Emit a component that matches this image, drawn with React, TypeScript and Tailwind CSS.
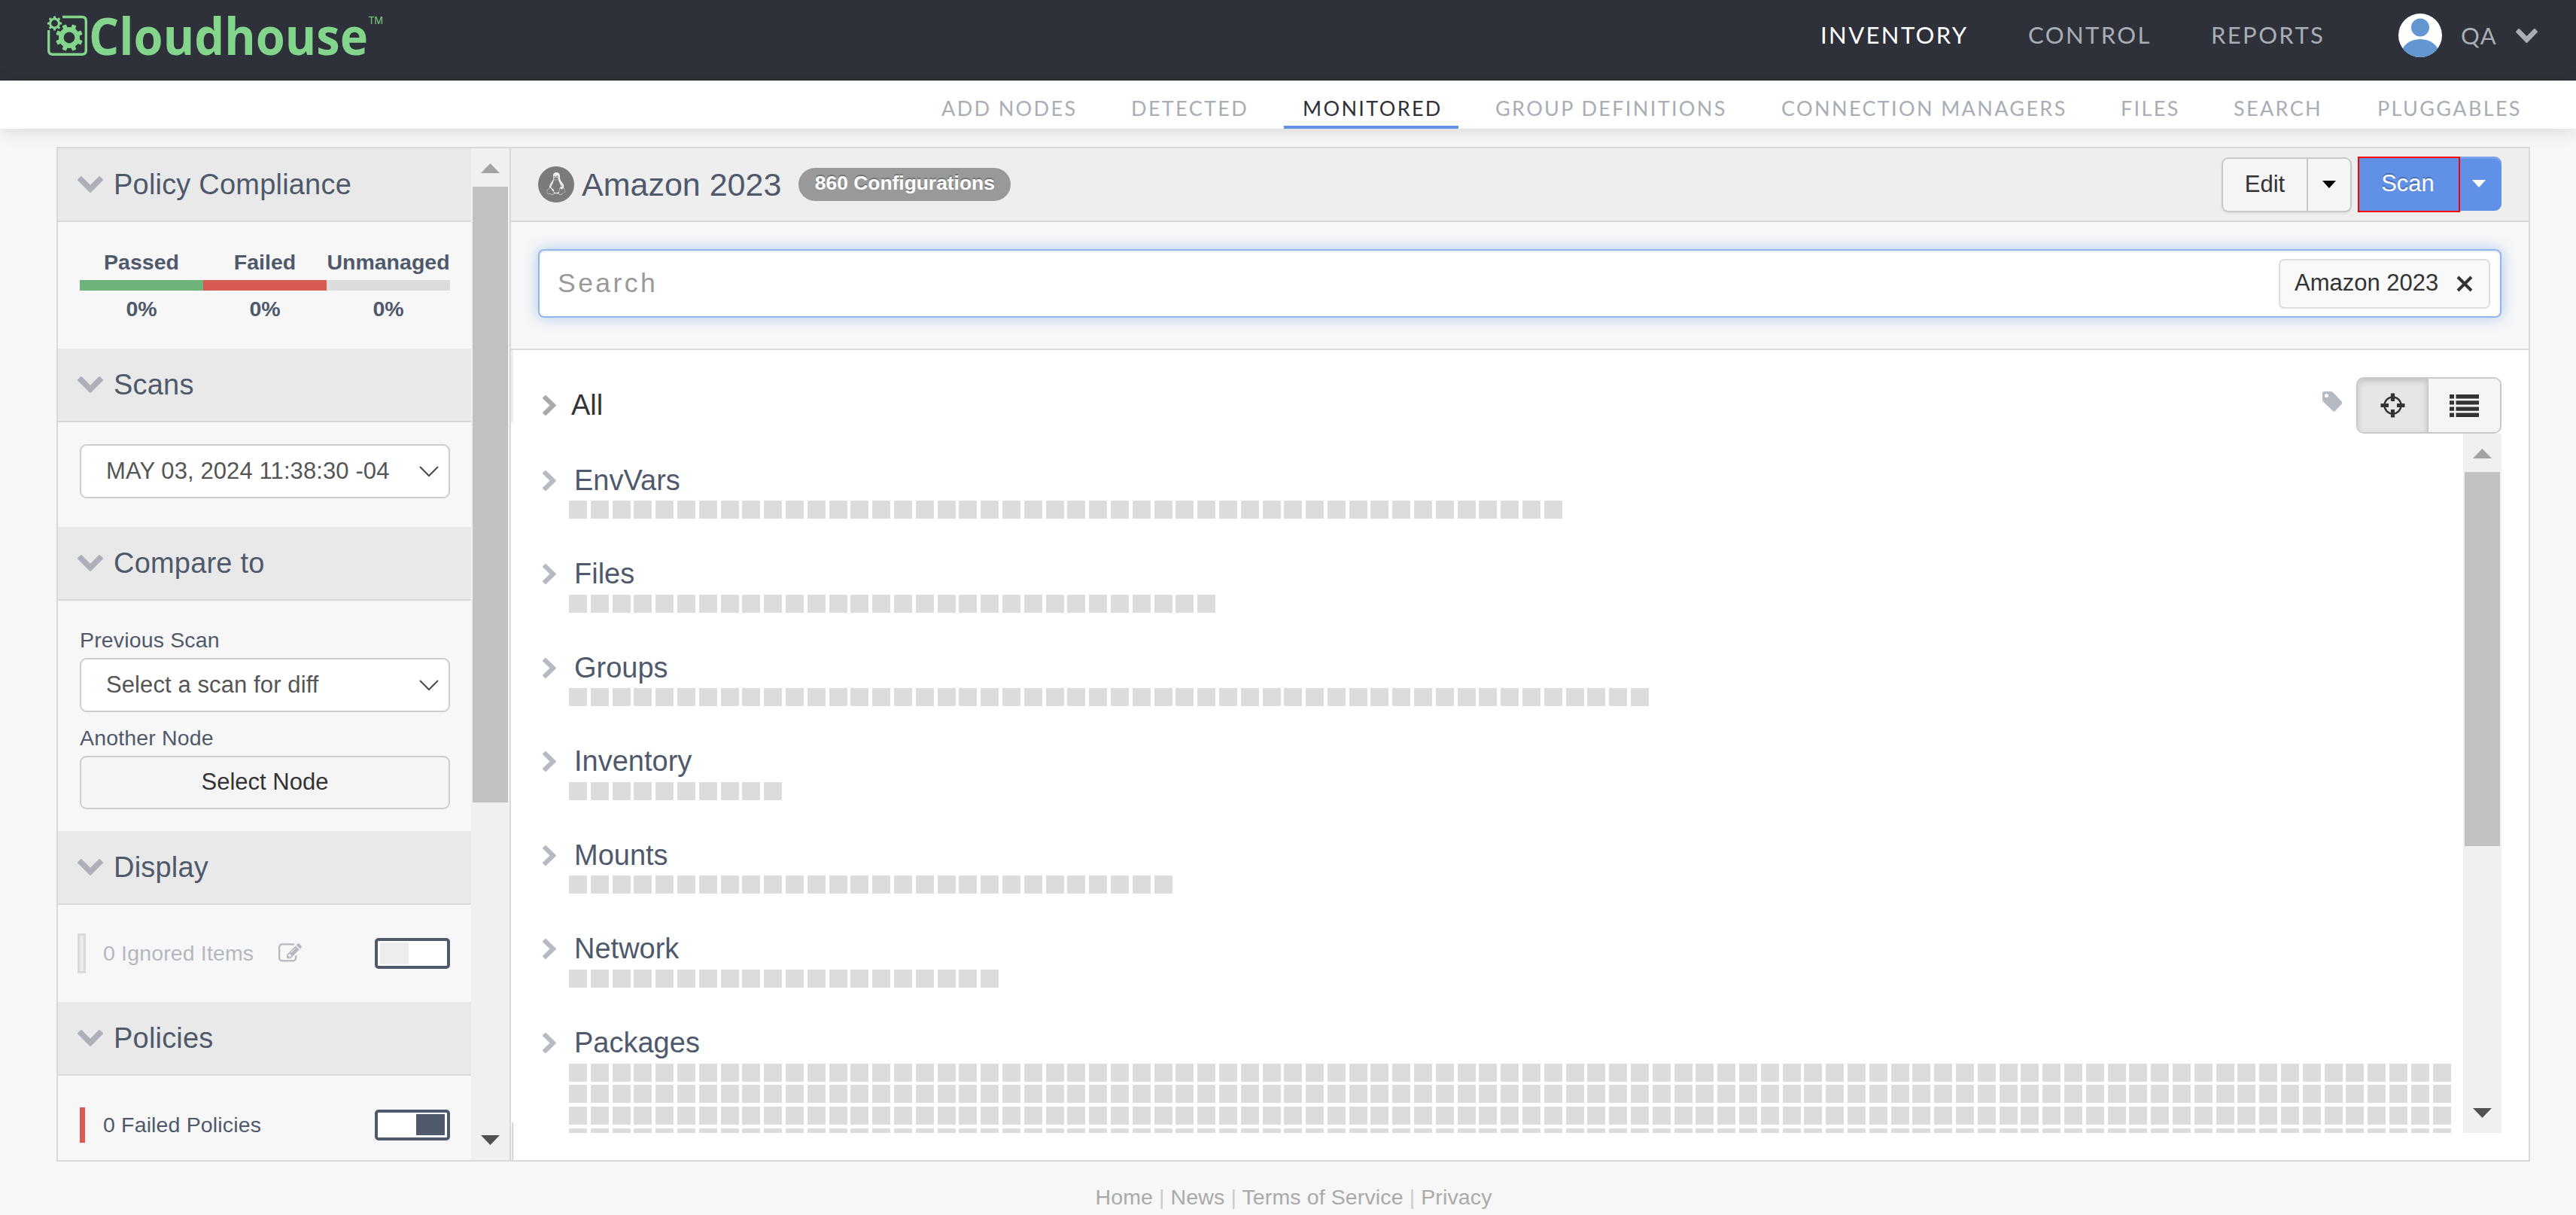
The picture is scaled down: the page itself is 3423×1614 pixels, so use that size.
import type { ReactNode } from "react";
import { FaLinux } from "react-icons/fa";

const NAV = [
  { label: "INVENTORY", width: "w-[196px]", active: true },
  { label: "CONTROL", width: "w-[163px]" },
  { label: "REPORTS", width: "w-[152px]" },
];

const SUBNAV = [
  { label: "ADD NODES", width: "w-[178px]" },
  { label: "DETECTED", width: "w-[154px]" },
  { label: "MONITORED", width: "w-[182px]", active: true },
  { label: "GROUP DEFINITIONS", width: "w-[306px]" },
  { label: "CONNECTION MANAGERS", width: "w-[377px]" },
  { label: "FILES", width: "w-[76px]" },
  { label: "SEARCH", width: "w-[117px]" },
  { label: "PLUGGABLES", width: "w-[191px]" },
];

const GROUPS = [
  { name: "EnvVars", count: 46 },
  { name: "Files", count: 30 },
  { name: "Groups", count: 50 },
  { name: "Inventory", count: 10 },
  { name: "Mounts", count: 28 },
  { name: "Network", count: 20 },
  { name: "Packages", count: 348 },
];

const ChevronDown = ({ className }: { className: string }) => (
  <svg viewBox="90 533 1612 1035" preserveAspectRatio="none" className={className} fill="currentColor">
    <path d="M1683 808l-742 741q-19 19-45 19t-45-19l-742-741q-19-19-19-45.5t19-45.5l166-165q19-19 45-19t45 19l531 531 531-531q19-19 45-19t45 19l166 165q19 19 19 45.5t-19 45.5z" />
  </svg>
);

const ChevronRight = ({ className }: { className: string }) => (
  <svg viewBox="346 26 1036 1612" preserveAspectRatio="none" className={className} fill="currentColor">
    <path d="M1363 877l-742 742q-19 19-45 19t-45-19l-166-166q-19-19-19-45t19-45l531-531-531-531q-19-19-19-45t19-45l166-166q19-19 45-19t45 19l742 742q19 19 19 45t-19 45z" />
  </svg>
);

function Gear({ cx, cy, r, hole, turn = 0 }: { cx: number; cy: number; r: number; hole: number; turn?: number }) {
  return (
    <g transform={`translate(${cx} ${cy}) rotate(${turn})`}>
      {[0, 45, 90, 135, 180, 225, 270, 315].map((a) => (
        <rect key={a} x={-r * 0.16} y={-r} width={r * 0.32} height={r * 0.4} rx={r * 0.06} transform={`rotate(${a})`} />
      ))}
      <circle r={(r * 0.78 + hole) / 2} fill="none" stroke="#83d58c" strokeWidth={r * 0.78 - hole} />
    </g>
  );
}

const Logo = () => (
  <svg viewBox="0 0 450 60" className="h-[60px] w-[450px] overflow-visible" fill="#83d58c">
    <path
      d="M20 4.5 H46 Q51.3 4.5 51.3 10 V49 Q51.3 54.3 46 54.3 H7 Q1.7 54.3 1.7 49 V22"
      fill="none"
      stroke="#83d58c"
      strokeWidth="3.4"
    />
    <Gear cx={9.5} cy={13} r={9.6} hole={4.4} />
    <Gear cx={29} cy={32} r={18} hole={7.4} turn={22.5} />
    <text
      x="55"
      y="55"
      fontSize="68"
      fontWeight="700"
      textLength="371"
      lengthAdjust="spacingAndGlyphs"
      fontFamily="'Open Sans', 'Noto Sans', sans-serif"
    >
      Cloudhouse
    </text>
    <text x="427" y="14" fontSize="15" textLength="19" lengthAdjust="spacingAndGlyphs" fontFamily="'Open Sans', sans-serif">
      TM
    </text>
  </svg>
);

const Arrow = ({ down = false }: { down?: boolean }) => (
  <svg viewBox="0 0 25 13" className={down ? "h-[13px] w-[25px] rotate-180 text-[#505050]" : "h-[13px] w-[25px] text-[#a3a3a3]"}>
    <path d="M12.5 0 L25 13 H0 Z" fill="currentColor" />
  </svg>
);

function Scrollbar({ thumb }: { thumb: string }) {
  return (
    <div className="flex w-[51px] shrink-0 flex-col items-center bg-[#f0f0f0]">
      <div className="flex h-[51px] w-full shrink-0 items-center justify-center pt-[2px]">
        <Arrow />
      </div>
      <div className={`w-[47px] bg-[#c1c1c1] ${thumb}`} />
      <div className="mt-auto mb-[20px]">
        <Arrow down />
      </div>
    </div>
  );
}

function Section({ title, body, children }: { title: string; body: string; children: ReactNode }) {
  return (
    <section className="shrink-0">
      <h2 className="flex h-[98px] items-center gap-[14px] border-b-2 border-[#dadada] bg-[#e9e9e9] pl-[26px] text-[38px] tracking-[0.2px] text-[#4f596c]">
        <ChevronDown className="h-[22px] w-[34px] text-[#adb0b8]" />
        {title}
      </h2>
      <div className={`pr-[28px] pl-[29px] ${body}`}>{children}</div>
    </section>
  );
}

const Select = ({ value }: { value: string }) => (
  <div className="flex h-[72px] items-center justify-between rounded-[9px] border-2 border-[#ccc] bg-white pr-[13px] pl-[33px] text-[31px] tracking-[0.1px] text-[#555]">
    <span className="whitespace-nowrap">{value}</span>
    <svg viewBox="0 0 26 15" className="h-[15px] w-[26px]" fill="none" stroke="#4a4a4a" strokeWidth="2">
      <path d="M1 1 L13 13 L25 1" />
    </svg>
  </div>
);

const Toggle = ({ on = false }: { on?: boolean }) => (
  <div
    className={`flex h-[41px] w-[100px] items-center rounded-[5px] border-4 border-[#4f596c] bg-white px-[3px] ${on ? "justify-end" : ""}`}
  >
    <div className={on ? "h-[28px] w-[38px] bg-[#4f596c]" : "h-[29px] w-[38px] bg-[#ededed]"} />
  </div>
);

function Sidebar() {
  return (
    <div className="flex w-[602px] shrink-0 border-r-2 border-[#d9d9d9]">
      <div className="flex w-[549px] flex-col overflow-hidden">
        <Section title="Policy Compliance" body="h-[168px] pt-[36px]">
          <div className="grid grid-cols-3 text-center text-[28.5px] leading-[34px] font-bold text-[#4f596c]">
            <span>Passed</span>
            <span>Failed</span>
            <span className="whitespace-nowrap">Unmanaged</span>
            <span className="mt-[7px] h-[14px] bg-[#6db37b]" />
            <span className="mt-[7px] h-[14px] bg-[#d75b53]" />
            <span className="mt-[7px] h-[14px] bg-[#dcdcdc]" />
            <span className="mt-[7px]">0%</span>
            <span className="mt-[7px]">0%</span>
            <span className="mt-[7px]">0%</span>
          </div>
        </Section>

        <Section title="Scans" body="h-[139px] pt-[29px]">
          <Select value="MAY 03, 2024 11:38:30 -04" />
        </Section>

        <Section title="Compare to" body="h-[306px] pt-[35px]">
          <div className="pb-[6px] text-[28.5px] leading-[35px] tracking-[0.15px] text-[#4f596c]">Previous Scan</div>
          <Select value="Select a scan for diff" />
          <div className="pt-[17px] pb-[6px] text-[28.5px] leading-[35px] tracking-[0.15px] text-[#4f596c]">Another Node</div>
          <button className="h-[71px] w-full rounded-[9px] border-2 border-[#ccc] bg-[#f5f5f5] text-[31px] text-[#333]">
            Select Node
          </button>
        </Section>

        <Section title="Display" body="h-[129px]">
          <div className="-ml-[3px] flex h-[129px] items-center text-[28.5px] tracking-[0.15px] text-[#b5b8c0]">
            <span className="h-[53px] w-[11px] border-[3px] border-[#d9d9d9] bg-[#ebebeb]" />
            <span className="ml-[23px]">0 Ignored Items</span>
            <svg viewBox="0 0 1792 1792" className="mr-auto ml-[33px] h-[31px] w-[31px]" fill="currentColor">
              <path d="M888 1184l116-116-152-152-116 116v56h96v96h56zm440-720q-16-16-33 1l-350 350q-17 17-1 33t33-1l350-350q17-17 1-33zm80 594v190q0 119-84.5 203.5t-203.5 84.5h-832q-119 0-203.5-84.5t-84.5-203.5v-832q0-119 84.5-203.5t203.5-84.5h832q63 0 117 25 15 7 18 23 3 17-9 29l-49 49q-14 14-32 8-23-6-45-6h-832q-66 0-113 47t-47 113v832q0 66 47 113t113 47h832q66 0 113-47t47-113v-126q0-13 9-22l64-64q15-15 35-7t20 29zm-96-738l288 288-672 672h-288v-288zm444 132l-92 92-288-288 92-92q28-28 68-28t68 28l152 152q28 28 28 68t-28 68z" />
            </svg>
            <Toggle />
          </div>
        </Section>

        <Section title="Policies" body="h-[130px]">
          <div className="flex h-[130px] items-center text-[28.5px] tracking-[0.15px] text-[#4f596c]">
            <span className="h-[47px] w-[7px] bg-[#d75b53]" />
            <span className="mr-auto ml-[24px]">0 Failed Policies</span>
            <Toggle on />
          </div>
        </Section>
      </div>
      <Scrollbar thumb="h-[818px]" />
    </div>
  );
}

const Caret = () => (
  <svg viewBox="0 0 18 10" className="h-[10px] w-[18px]" fill="currentColor">
    <path d="M0 0 H18 L9 10 Z" />
  </svg>
);

function TitleBar() {
  return (
    <div className="flex h-[98px] shrink-0 items-center border-b-2 border-[#d9d9d9] bg-[#eee] pr-[36px] pl-[36px]">
      <span className="flex h-[48px] w-[48px] items-center justify-center rounded-full bg-[#7b7b7b] pb-[2px] text-[30px] text-[#f2f2f2]">
        <FaLinux />
      </span>
      <h1 className="ml-[10px] text-[43px] text-[#4f596c]">Amazon 2023</h1>
      <span className="ml-[23px] flex h-[44px] w-[282px] items-center justify-center rounded-[22px] bg-[#999] pb-[2px] text-[26.4px] font-bold whitespace-nowrap text-white [text-shadow:0_-2px_0_rgba(0,0,0,0.25)]">
        860 Configurations
      </span>
      <div className="ml-auto flex h-[73px] w-[173px] rounded-[9px] border-2 border-[#c8c8c8] bg-[#f5f5f5] text-[31px] text-[#333] shadow-[0_2px_3px_rgba(0,0,0,0.06)]">
        <button className="w-[113px] border-r-2 border-[#c8c8c8]">Edit</button>
        <button className="flex flex-1 items-center justify-center text-black">
          <Caret />
        </button>
      </div>
      <div className="ml-[8px] flex h-[74px] w-[191px] text-[31px] text-white">
        <button className="w-[136px] border-2 border-[#f00] bg-[#6191e6] pr-[3px] pb-[1px] [text-shadow:0_-2px_0_rgba(0,0,0,0.25)]">
          Scan
        </button>
        <button className="mb-[2px] flex flex-1 items-center justify-center rounded-r-[9px] bg-[#6191e6] pr-[6px] shadow-[inset_0_3px_0_rgba(255,255,255,0.15)]">
          <Caret />
        </button>
      </div>
    </div>
  );
}

function SearchBar() {
  return (
    <div className="h-[170px] shrink-0 border-b-2 border-[#dcdcdc] bg-[#f7f7f7] px-[36px] pt-[36px]">
      <div className="flex h-[91px] items-center justify-between rounded-[8px] border-2 border-[#90b8ec] bg-white pr-[13px] pl-[24px] shadow-[0_0_19px_rgba(82,138,222,0.45),inset_0_2px_3px_rgba(0,0,0,0.08)]">
        <span className="text-[35.6px] tracking-[3.4px] text-[#999]">Search</span>
        <span className="flex h-[66px] w-[281px] items-center rounded-[7px] border-2 border-[#ddd] bg-[#f9f9f9] pl-[19px] text-[31px] whitespace-nowrap text-[#333]">
          Amazon 2023
          <svg viewBox="0 0 22 22" className="ml-[24px] h-[22px] w-[22px]" stroke="#333" strokeWidth="4">
            <path d="M2 2 L20 20 M20 2 L2 20" />
          </svg>
        </span>
      </div>
    </div>
  );
}

function Toolbar() {
  return (
    <div className="flex h-[111px] shrink-0 pt-[36px]">
      <div className="flex h-[75px] items-center text-[38px] text-[#333]">
        <ChevronRight className="mr-[20px] ml-[6px] h-[27px] w-[18px] text-[#aaa]" />
        All
      </div>
      <svg viewBox="0 0 27 27" className="mt-[19px] mr-[18px] ml-auto h-[27px] w-[27px]" fill="#b6bac3">
        <path
          fillRule="evenodd"
          d="M2.5 0 H11 Q13 0 14.5 1.5 L25.7 13.5 Q27 15 25.7 16.5 L17 26 Q15.5 27 14 26 L1.5 14 Q0 12.5 0 10.5 V2.5 Q0 0 2.5 0 Z M5.5 3 A2.5 2.5 0 1 0 5.5 8 A2.5 2.5 0 1 0 5.5 3 Z"
        />
      </svg>
      <div className="flex h-[75px] w-[193px] overflow-hidden rounded-[10px] border-2 border-[#c8c8c8]">
        <button className="flex w-[94px] items-center justify-center border-r-2 border-[#c8c8c8] bg-[#e6e6e6] shadow-[inset_0_4px_9px_rgba(0,0,0,0.15)]">
          <svg viewBox="0 0 33 33" className="h-[33px] w-[33px]" fill="none" stroke="#333">
            <circle cx="16.5" cy="16.5" r="11" strokeWidth="2.4" />
            <path d="M16.5 0.5 V11 M16.5 22 V32.5 M0.5 16.5 H11 M22 16.5 H32.5" strokeWidth="5.2" />
          </svg>
        </button>
        <button className="flex flex-1 items-center justify-center bg-[#f5f5f5]">
          <svg viewBox="0 0 39 30" className="h-[30px] w-[39px]" fill="#333">
            {[0, 8.2, 16.4, 24.6].map((y) => (
              <path key={y} d={`M0 ${y} h6 v5.4 h-6 z M8.5 ${y} h30.5 v5.4 h-30.5 z`} />
            ))}
          </svg>
        </button>
      </div>
    </div>
  );
}

function GroupRow({ name, count }: { name: string; count: number }) {
  return (
    <div className="mb-[46.6px]">
      <div className="flex h-[54px] items-center text-[38px] text-[#4f596c]">
        <ChevronRight className="mr-[24px] ml-[6px] h-[27px] w-[18px] text-[#b6bac3]" />
        {name}
      </div>
      <div className="ml-[41px] flex flex-wrap gap-[4.8px]">
        {Array.from({ length: count }, (_, i) => (
          <span key={i} className="h-[24px] w-[24px] bg-[#dcdcdc]" />
        ))}
      </div>
    </div>
  );
}

function Main() {
  return (
    <main className="relative flex min-w-0 flex-1 flex-col bg-white">
      <TitleBar />
      <SearchBar />
      <div className="flex min-h-0 flex-1 flex-col px-[36px] pb-[36px]">
        <Toolbar />
        <div className="flex min-h-0 flex-1">
          <div className="min-w-0 flex-1 overflow-hidden pt-[35px] pr-[13px]">
            {GROUPS.map((g) => (
              <GroupRow key={g.name} {...g} />
            ))}
          </div>
          <Scrollbar thumb="h-[497px]" />
        </div>
      </div>
      {/* edge of the collapsed pane behind the list */}
      <div className="absolute top-[268px] left-0 h-[96px] w-[3px] bg-[#eee]" />
      <div className="absolute bottom-0 left-0 h-[50px] w-[3px] border-r border-[#c1c1c1] bg-[#f0f0f0]" />
    </main>
  );
}

export default function App() {
  return (
    <div className="flex h-[1614px] w-[3423px] flex-col overflow-hidden bg-[#f7f7f7] font-['Liberation_Sans',Arial,sans-serif]">
      <header className="flex h-[107px] shrink-0 bg-[#2e3139] pr-[51px] pl-[63px] font-[Lato,sans-serif]">
        <div className="pt-[18px]">
          <Logo />
        </div>
        <nav className="ml-auto flex gap-[80px] text-[31px] leading-[93px] tracking-[2.4px] whitespace-nowrap text-[#a9adb5]">
          {NAV.map((n) => (
            <a key={n.label} className={`${n.width} ${n.active ? "text-white" : ""}`}>
              {n.label}
            </a>
          ))}
        </nav>
        <div className="ml-[97px] flex h-[94px] items-center text-[31px] tracking-[1.4px] text-[#a9adb5]">
          <svg viewBox="0 0 58 58" className="h-[58px] w-[58px]">
            <clipPath id="avatar">
              <circle cx="29" cy="29" r="29" />
            </clipPath>
            <g clipPath="url(#avatar)">
              <rect width="58" height="58" fill="#fff" />
              <circle cx="29" cy="18.5" r="12" fill="#6297d1" />
              <ellipse cx="29" cy="54" rx="25" ry="20" fill="#6297d1" />
            </g>
          </svg>
          <span className="ml-[25px] w-[49px]">QA</span>
          <ChevronDown className="ml-[24px] h-[19px] w-[29px]" />
        </div>
      </header>

      <nav className="relative flex h-[64px] shrink-0 justify-end gap-[24px] bg-white pr-[48px] font-[Lato,sans-serif] text-[27px] tracking-[2.35px] whitespace-nowrap text-[#a9adb5] shadow-[0_4px_24px_rgba(0,0,0,0.12)]">
        {SUBNAV.map((n) => (
          <a
            key={n.label}
            className={`box-content h-[60px] border-b-4 px-[25px] leading-[73px] ${n.width} ${
              n.active ? "border-[#6191e6] text-[#2e3139]" : "border-transparent"
            }`}
          >
            {n.label}
          </a>
        ))}
      </nav>

      <div className="mt-[24px] mr-[61px] ml-[75px] flex h-[1348px] shrink-0 border-2 border-[#d9d9d9]">
        <Sidebar />
        <Main />
      </div>

      <footer className="pt-[30px] pl-[15px] text-center text-[28.5px] leading-[34px] tracking-[0.12px] text-[#aaa]">
        Home <span className="text-[#ccc]">|</span> News <span className="text-[#ccc]">|</span> Terms of Service{" "}
        <span className="text-[#ccc]">|</span> Privacy
      </footer>
    </div>
  );
}
